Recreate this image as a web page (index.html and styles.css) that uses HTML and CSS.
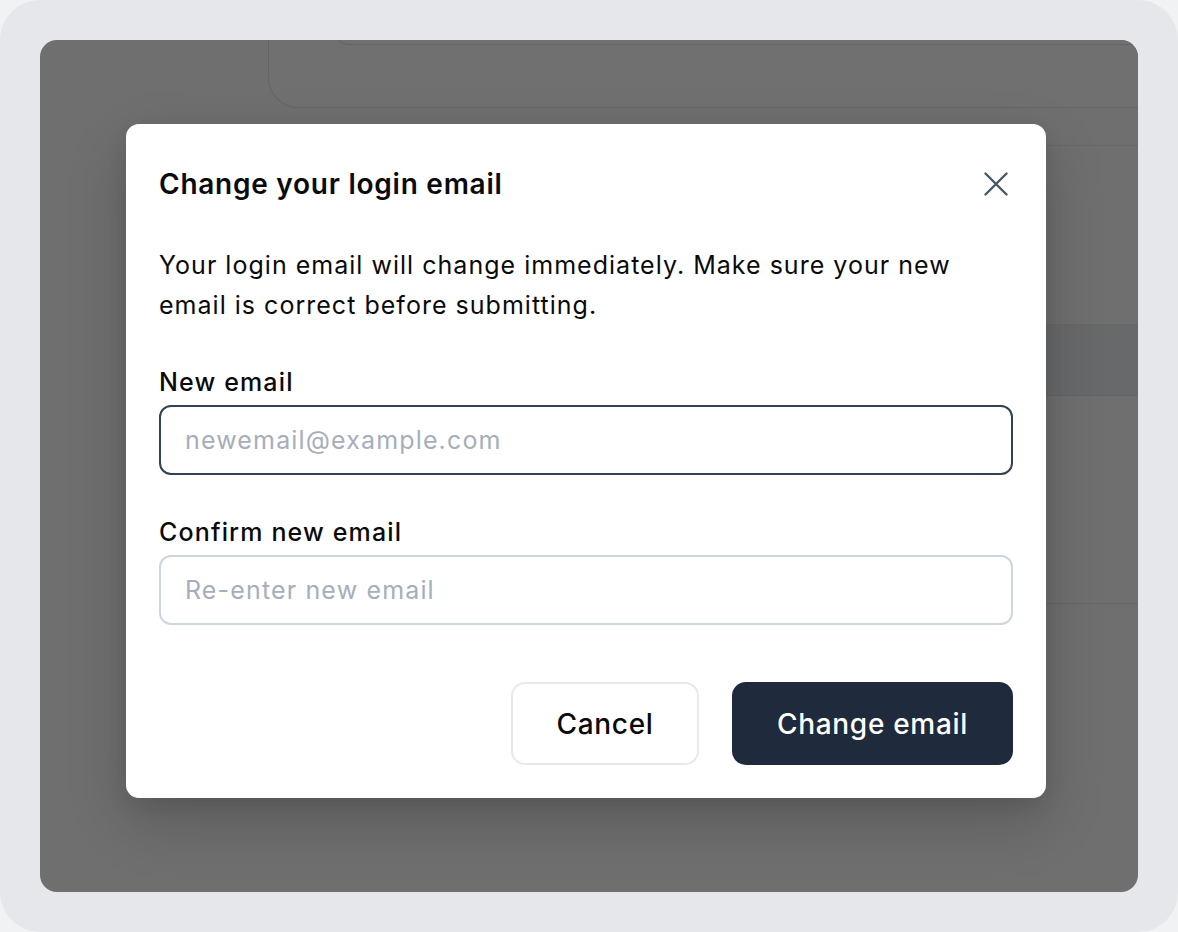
FILE: index.html
```html
<!DOCTYPE html>
<html lang="en">
<head>
<meta charset="utf-8">
<title>Change your login email</title>
<link rel="stylesheet" href="styles.css">
</head>
<body>
<div class="frame">
  <div class="screen">
    <div class="bg-content">
      <div class="bg-card"><div class="bg-card-inner"></div></div>
      <div class="bg-rows">
        <div class="bg-row bg-row-a"></div>
        <div class="bg-row bg-row-head"></div>
        <div class="bg-row bg-row-b"></div>
      </div>
    </div>

    <div class="modal" role="dialog" aria-labelledby="modal-title">
      <div class="modal-header">
        <h2 id="modal-title" class="modal-title">Change your login email</h2>
        <button class="close-btn" aria-label="Close">
          <svg width="24" height="24" viewBox="0 0 24 24" fill="none" stroke="currentColor" stroke-width="2.4" stroke-linecap="round">
            <path d="M1.5 1.5L22.5 22.5M22.5 1.5L1.5 22.5"/>
          </svg>
        </button>
      </div>
      <div class="modal-body">
        <p class="modal-text">Your login email will change immediately. Make sure your new email is correct before submitting.</p>
        <div class="field">
          <label class="field-label" for="new-email">New email</label>
          <input id="new-email" class="field-input field-input-focus" type="email" placeholder="newemail@example.com">
        </div>
        <div class="field">
          <label class="field-label" for="confirm-email">Confirm new email</label>
          <input id="confirm-email" class="field-input" type="email" placeholder="Re-enter new email">
        </div>
      </div>
      <div class="modal-actions">
        <button class="btn btn-secondary">Cancel</button>
        <button class="btn btn-primary">Change email</button>
      </div>
    </div>
  </div>
</div>
</body>
</html>
```

FILE: styles.css
```css
html, body {
  margin: 0;
  padding: 0;
  background: #f1f2f4;
}

body {
  font-family: Inter, "Noto Sans", "Liberation Sans", sans-serif;
  color: #0a0a0a;
}

.frame {
  width: 1178px;
  height: 932px;
  box-sizing: border-box;
  padding: 40px;
  background: #e5e7eb;
  border-radius: 40px;
}

.screen {
  position: relative;
  width: 100%;
  height: 100%;
  background: #6f6f6f;
  border-radius: 17px;
  overflow: hidden;
}

.bg-content {
  padding-left: 228px;
  display: flex;
  flex-direction: column;
}

.bg-card {
  margin-top: -40px;
  height: 107px;
  background: #707070;
  border-left: 1px solid #656565;
  border-bottom: 1px solid #656565;
  border-bottom-left-radius: 30px;
  padding-left: 66px;
}

.bg-card-inner {
  height: 44px;
  border-left: 1px solid #656565;
  border-bottom: 1px solid #656565;
  border-bottom-left-radius: 14px;
}

.bg-rows {
  margin-top: 37px;
  display: flex;
  flex-direction: column;
}

.bg-row {
  border-top: 1px solid #666767;
}

.bg-row-a {
  height: 178px;
}

.bg-row-head {
  height: 70px;
  background: #68696b;
  border-bottom: 1px solid #636466;
}

.bg-row-b {
  height: 207px;
  border-top: none;
  border-bottom: 1px solid #666767;
}

.modal {
  position: absolute;
  left: 86px;
  top: 84px;
  width: 920px;
  box-sizing: border-box;
  padding: 32px 33px 33px 33px;
  background: #ffffff;
  border-radius: 13px;
  box-shadow: 0 24px 60px rgba(0, 0, 0, 0.18), 0 8px 20px rgba(0, 0, 0, 0.08);
}

.modal-header {
  height: 56px;
  display: flex;
  align-items: center;
  justify-content: space-between;
}

.modal-title {
  margin: 0;
  font-size: 28px;
  font-weight: 600;
  letter-spacing: 0.75px;
  color: #0a0a0a;
}

.close-btn {
  width: 36px;
  height: 36px;
  margin-right: -1px;
  padding: 0;
  border: none;
  background: transparent;
  color: #4b5563;
  display: flex;
  align-items: center;
  justify-content: center;
  cursor: pointer;
}

.modal-body {
  margin-top: 33px;
  display: flex;
  flex-direction: column;
  gap: 39px;
}

.modal-text {
  margin: 0;
  font-size: 25px;
  line-height: 40px;
  letter-spacing: 1.02px;
  color: #0a0a0a;
}

.field {
  display: flex;
  flex-direction: column;
}

.field-label {
  font-size: 25px;
  line-height: 36px;
  font-weight: 500;
  letter-spacing: 1.15px;
  margin-bottom: 5px;
  color: #0a0a0a;
}

.field-input {
  height: 70px;
  box-sizing: border-box;
  padding: 0 24px;
  border: 2px solid #cfd5de;
  border-radius: 12px;
  font-family: inherit;
  font-size: 25px;
  letter-spacing: 1.15px;
  color: #0a0a0a;
  background: #ffffff;
  outline: none;
}

.field-input::placeholder {
  color: #a6aeba;
}

.field-input-focus {
  border-color: #334155;
}

.modal-actions {
  margin-top: 57px;
  display: flex;
  justify-content: flex-end;
  gap: 33px;
}

.btn {
  height: 83px;
  box-sizing: border-box;
  border-radius: 14px;
  font-family: inherit;
  font-size: 28px;
  font-weight: 500;
  letter-spacing: 0.7px;
  cursor: pointer;
}

.btn-secondary {
  width: 188px;
  background: #ffffff;
  border: 2px solid #e8e9ee;
  color: #0a0a0a;
}

.btn-primary {
  width: 281px;
  background: #1f2a3c;
  border: none;
  color: #ffffff;
}
```
